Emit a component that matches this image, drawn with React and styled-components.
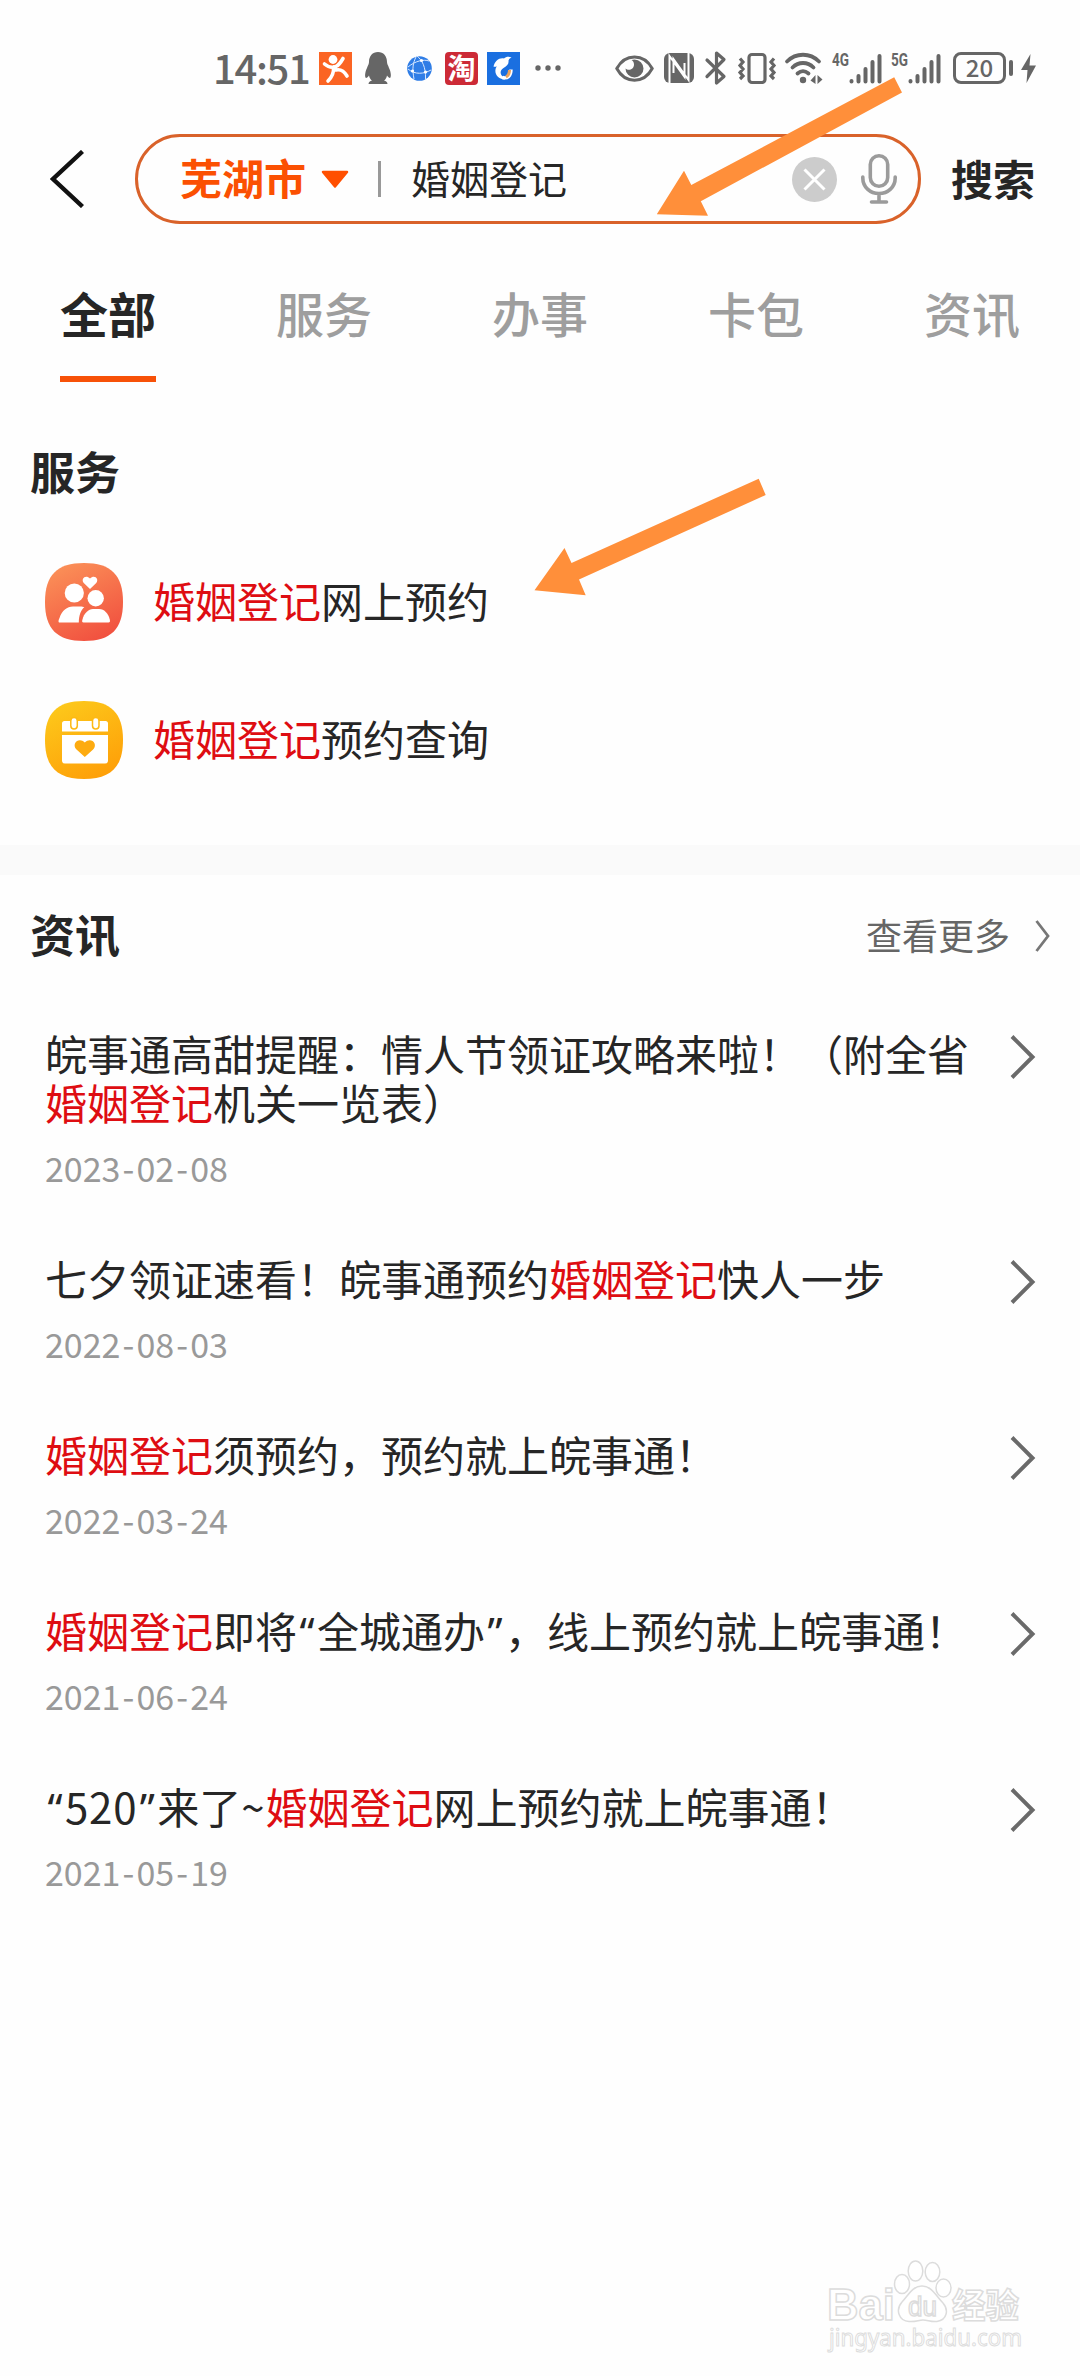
import React from 'react';
import styled, { createGlobalStyle } from 'styled-components';

const KEYWORD = '婚姻登记';

const tabs = ['全部', '服务', '办事', '卡包', '资讯'];

const news = [
  { title: '皖事通高甜提醒：情人节领证攻略来啦！（附全省婚姻登记机关一览表）', date: '2023-02-08' },
  { title: '七夕领证速看！皖事通预约婚姻登记快人一步', date: '2022-08-03' },
  { title: '婚姻登记须预约，预约就上皖事通！', date: '2022-03-24' },
  { title: '婚姻登记即将“全城通办”，线上预约就上皖事通！', date: '2021-06-24' },
  { title: '“520”来了~婚姻登记网上预约就上皖事通！', date: '2021-05-19' },
];

// splits on the keyword, on curly quotes and on latin runs, which need their own width
function Highlight({ text }) {
  return text.split(/(婚姻登记|[“”]|[\d~]+)/).map((part, i) => {
    if (part === KEYWORD) return <Red key={i}>{part}</Red>;
    if (part === '“' || part === '”') return <Quote key={i}>{part}</Quote>;
    if (/^[\d~]+$/.test(part)) return <Latin key={i}>{part}</Latin>;
    return part;
  });
}

function DateText({ value }) {
  return (
    <NewsDate>
      {value.split(/(-)/).map((part, i) => (part === '-' ? <Dash key={i}>-</Dash> : part))}
    </NewsDate>
  );
}

function SignalBars({ label }) {
  return (
    <Icon $left={9} width="50" height="34" viewBox="0 0 50 34">
      <SignalLabel x="0" y="15" textLength="17" lengthAdjust="spacingAndGlyphs">
        {label}
      </SignalLabel>
      <g stroke="#666" strokeWidth="4" strokeLinecap="round">
        <path d="M19.5 30V30.5M26.5 25V30.5M33.5 18V30.5M40.5 11V30.5M47.5 5V30.5" />
      </g>
    </Icon>
  );
}

function StatusBar() {
  return (
    <StatusWrapper>
      <StatusGroup>
        <Time>14:51</Time>
        <Icon width="33" height="33" viewBox="0 0 33 33">
          <rect width="33" height="33" fill="#fb6423" />
          <circle cx="14" cy="7.5" r="4.4" fill="#fff" />
          <path
            d="M5.5 12C9 15 13 16 17 14.5C20 13 22 10 24 6.5M14.5 15C15 20 13 25 9 29M17 18C21 17 25 19 28 24"
            fill="none"
            stroke="#fff"
            strokeWidth="3.6"
            strokeLinecap="round"
          />
        </Icon>
        <Icon $left={13} width="26" height="32" viewBox="0 0 26 32">
          <path
            fill="#666"
            d="M13 0C7.5 0 4 4 4 10C4 12 3 13 2 16C0 20 -.5 25 1 26C2 26 3 25 4 23.5C4.5 26 5.5 27.5 7 28.5C5 29 3.5 30 3.5 32H22.5C22.5 30 21 29 19 28.5C20.5 27.5 21.5 26 22 23.5C23 25 24 26 25 26C26.5 25 26 20 24 16C23 13 22 12 22 10C22 4 18.5 0 13 0Z"
          />
        </Icon>
        <Icon $left={16} width="25" height="25" viewBox="0 0 25 25">
          <circle cx="12.5" cy="12.5" r="12.3" fill="#2f7de6" />
          <path
            d="M10 0C15 4 19 11 18.5 23M1 11C8 5 17 3 22 5M1 13C8 19 17 18 24 14M9 1C6 7 5 12 7 23"
            fill="none"
            stroke="#d7e8ff"
            strokeWidth="1"
          />
          <circle cx="14.5" cy="4.5" r="1.6" fill="#fff" />
          <circle cx="18.5" cy="16" r="1.6" fill="#fff" />
          <circle cx="5.5" cy="15" r="1.6" fill="#fff" />
        </Icon>
        <Icon $left={13} width="33" height="33" viewBox="0 0 33 33">
          <rect width="33" height="33" rx="4" fill="#cc2a36" />
          <TaoLabel x="2.5" y="26.5">淘</TaoLabel>
        </Icon>
        <Icon $left={9} width="33" height="33" viewBox="0 0 33 33">
          <rect width="33" height="33" fill="#1a6fe0" />
          <path
            fill="#fff"
            d="M6.5 14.5C8 9 12 5.500 17 6.500C19 4.500 22 4.300 24.500 5.500C22.500 6.500 21.500 7.500 21.500 9C22 12 19.500 14.500 16.500 16C13 18 12.500 22 16 24.500C17 25.500 18 26.500 18 27.500C12 27.500 7.500 23 8.500 17.500C8.700 16 9.300 15 9.800 14.200C8.800 14.800 7.500 15 6.500 14.500Z"
          />
          <path d="M15.500 25.500C20.500 27 24 24 24 17.500" fill="none" stroke="#fff" strokeWidth="3.400" />
          <path d="M19 25C21.500 23.500 22.500 21.500 22.500 18" fill="none" stroke="#e9a25e" strokeWidth="3" />
        </Icon>
        <Icon $left={15} width="26" height="6" viewBox="0 0 26 6">
          <g fill="#666">
            <circle cx="3" cy="3" r="2.7" />
            <circle cx="13" cy="3" r="2.7" />
            <circle cx="23" cy="3" r="2.7" />
          </g>
        </Icon>
      </StatusGroup>
      <StatusGroup>
        <Icon width="39" height="27" viewBox="0 0 39 27">
          <path
            d="M1.8 13.5C10 -2 29 -2 37.2 13.5C29 29 10 29 1.8 13.5Z"
            fill="none"
            stroke="#666"
            strokeWidth="3"
          />
          <path fill="#666" d="M19.5 4.5A9 9 0 1 1 10.5 13.5C13 16 19 15 19 9.5C19 7.5 18 5.5 16.5 5Z" />
        </Icon>
        <Icon $left={10} width="30" height="30" viewBox="0 0 30 30">
          <rect width="30" height="30" rx="6" fill="#666" />
          <path
            d="M5.5 30V3L20.500 24V10M24.500 0V27L9.500 6V20"
            fill="none"
            stroke="#fff"
            strokeWidth="2"
          />
        </Icon>
        <Icon $left={11} width="22" height="34" viewBox="0 0 22 34">
          <path
            d="M2 9L19 25.5L11.5 32V2L19 8.5L2 25.5"
            fill="none"
            stroke="#666"
            strokeWidth="3.2"
            strokeLinejoin="round"
            strokeLinecap="round"
          />
        </Icon>
        <Icon $left={11} width="38" height="31" viewBox="0 0 38 31">
          <g fill="none" stroke="#666" strokeWidth="3.2">
            <rect x="11" y="1.5" width="16" height="28" rx="3" />
            <path d="M2 5.5L5 9L2 12.5L5 16L2 19.5L5 23L2 26M36 5.5L33 9L36 12.5L33 16L36 19.5L33 23L36 26" />
          </g>
        </Icon>
        <Icon $left={9} width="38" height="31" viewBox="0 0 38 31">
          <g fill="none" stroke="#666" strokeWidth="3.8" strokeLinecap="round">
            <path d="M2 8.5C11 -.5 25 -.5 34 8.5" />
            <path d="M7.5 14.5C13.5 8.5 22.5 8.5 28.5 14.5" />
            <path d="M12.5 20.5C16 17.5 20 17.5 23.5 20.5" />
          </g>
          <circle cx="18" cy="27" r="3.2" fill="#666" />
          <path d="M30.5 22V31L25.5 27.5ZM32.5 22V31L37.5 26.5Z" fill="#666" />
        </Icon>
        <SignalBars label="4G" />
        <SignalBars label="5G" />
        <Battery>20</Battery>
        <BatteryNub />
        <Icon $left={8} width="15" height="29" viewBox="0 0 15 29">
          <path d="M9.5 0L0 16H6.5L5.5 29L15 11.5H8.5Z" fill="#666" />
        </Icon>
      </StatusGroup>
    </StatusWrapper>
  );
}

function SearchBar() {
  return (
    <SearchRow>
      <BackIcon width="34" height="58" viewBox="0 0 34 58">
        <path d="M32.5 1.5L3 29L32.5 56.5" fill="none" stroke="#111" strokeWidth="4.4" />
      </BackIcon>
      <SearchPill>
        <City>芜湖市</City>
        <CityArrow width="28" height="19" viewBox="0 0 28 19">
          <path
            d="M2 2H26L14 16.5Z"
            fill="#ff4f00"
            stroke="#ff4f00"
            strokeWidth="2.5"
            strokeLinejoin="round"
          />
        </CityArrow>
        <Divider />
        <Query>{KEYWORD}</Query>
        <svg width="45" height="45" viewBox="0 0 45 45">
          <circle cx="22.5" cy="22.5" r="22.5" fill="#ccc" />
          <path d="M12.5 12.5L32.5 32.5M32.5 12.5L12.5 32.5" stroke="#fff" strokeWidth="3" />
        </svg>
        <MicIcon width="36" height="50" viewBox="0 0 36 50">
          <g fill="none" stroke="#9b9b9b" strokeWidth="3.6" strokeLinecap="round">
            <rect x="9.3" y="1.8" width="17.4" height="30.4" rx="8.7" />
            <path d="M1.8 23V24C1.8 33 9 39.5 18 39.5S34.2 33 34.2 24V23M18 40V47.5M10.5 48H25.5" />
          </g>
        </MicIcon>
      </SearchPill>
      <SearchButton>搜索</SearchButton>
    </SearchRow>
  );
}

function CoupleIcon() {
  return (
    <svg width="78" height="78" viewBox="0 0 78 78">
      <defs>
        <linearGradient id="couple" x1="0.2" y1="0" x2="0.7" y2="1">
          <stop offset="0" stopColor="#fb9158" />
          <stop offset="1" stopColor="#f1503f" />
        </linearGradient>
      </defs>
      <path d="M39 0C66 0 78 12 78 39S66 78 39 78 0 66 0 39 12 0 39 0Z" fill="url(#couple)" />
      <g fill="#fff">
        <circle cx="29.3" cy="30" r="9.6" />
        <circle cx="50.7" cy="35.3" r="8.2" />
        <path d="M45 26L38.8 20C35.5 16 40.5 11 45 15.5C49.5 11 54.5 16 51.2 20Z" />
        <path d="M14.5 59.5C13 59.5 13.5 57 14.5 55C17 47.5 22 43.5 28 43.5H35C37 43.5 38.5 43.7 39.3 44.3C36 47 34 52 33.8 59.5Z" />
        <path d="M38.5 59.5C37 59.5 37 58.5 37.3 57C39 50 43.5 46 48 46H54C59.5 46 63.5 51 64.8 56.5C65.2 58.5 65 59.5 63.5 59.5Z" />
      </g>
    </svg>
  );
}

function CalendarIcon() {
  return (
    <svg width="78" height="78" viewBox="0 0 78 78">
      <defs>
        <linearGradient id="calendar" x1="0.2" y1="0" x2="0.7" y2="1">
          <stop offset="0" stopColor="#fdc91b" />
          <stop offset="1" stopColor="#fe9f08" />
        </linearGradient>
      </defs>
      <path d="M39 0C66 0 78 12 78 39S66 78 39 78 0 66 0 39 12 0 39 0Z" fill="url(#calendar)" />
      <path
        d="M17 30.5V22.5Q17 20 19.5 20H60.5Q63 20 63 22.5V30.5ZM17 34H63V59.5Q63 62.5 60 62.5H20Q17 62.5 17 59.5Z"
        fill="#fff"
      />
      <g fill="#fff" stroke="#fdb914" strokeWidth="1.5">
        <rect x="25.8" y="16.5" width="6.5" height="11.5" rx="3.2" />
        <rect x="47.5" y="16.5" width="6.5" height="11.5" rx="3.2" />
      </g>
      <path
        d="M39.8 56L31.500 48.500C26 42.500 34 35.500 39.800 41.500C45.600 35.500 53.600 42.500 48.100 48.500Z"
        fill="#fdab10"
      />
    </svg>
  );
}

function Chevron() {
  return (
    <ChevronSvg width="26" height="44" viewBox="0 0 26 44">
      <path d="M2 1.5L22.5 22L2 42.5" fill="none" stroke="#6a6a6a" strokeWidth="4" />
    </ChevronSvg>
  );
}

function Watermark() {
  return (
    <WatermarkSvg width="210" height="110" viewBox="0 0 210 110">
      <g fill="#fff" stroke="#dcdcdc" strokeWidth="1.5">
        <BrandText x="7" y="70" textLength="68" lengthAdjust="spacingAndGlyphs">
          Bai
        </BrandText>
        <ellipse cx="82" cy="34" rx="7.5" ry="9.5" />
        <ellipse cx="95.5" cy="21" rx="7.3" ry="10" />
        <ellipse cx="112.500" cy="22" rx="7.3" ry="9.5" />
        <ellipse cx="123.5" cy="38" rx="7.5" ry="9" />
        <path d="M102 36C92 36 88 46 82 52C75 60 79 71 89 71.5C97 72 98 70 103 70C108 70 110 72 117 71.5C127 70 129 60 123 53C116 46 112 36 102 36Z" />
        <DuText x="88" y="66" textLength="29" lengthAdjust="spacingAndGlyphs">
          du
        </DuText>
        <JingyanText x="132" y="68" textLength="67" lengthAdjust="spacingAndGlyphs">
          经验
        </JingyanText>
        <UrlText x="9" y="96" textLength="193" lengthAdjust="spacingAndGlyphs">
          jingyan.baidu.com
        </UrlText>
      </g>
    </WatermarkSvg>
  );
}

function App() {
  return (
    <Page>
      <GlobalStyle />
      <StatusBar />
      <SearchBar />
      <Tabs>
        {tabs.map((tab, i) => (
          <Tab key={tab} $active={i === 0}>
            {tab}
          </Tab>
        ))}
      </Tabs>
      <Services>
        <Heading>服务</Heading>
        <ServiceRow>
          <CoupleIcon />
          <ServiceName>
            <Highlight text="婚姻登记网上预约" />
          </ServiceName>
        </ServiceRow>
        <ServiceRow>
          <CalendarIcon />
          <ServiceName>
            <Highlight text="婚姻登记预约查询" />
          </ServiceName>
        </ServiceRow>
      </Services>
      <News>
        <NewsHeader>
          <Heading>资讯</Heading>
          <More>
            查看更多
            <MoreIcon width="15" height="32" viewBox="0 0 15 32">
              <path d="M1.5 1L13 16L1.5 31" fill="none" stroke="#777" strokeWidth="2.8" />
            </MoreIcon>
          </More>
        </NewsHeader>
        {news.map((item) => (
          <NewsItem key={item.date}>
            <NewsBody>
              <NewsTitle>
                <Highlight text={item.title} />
              </NewsTitle>
              <DateText value={item.date} />
            </NewsBody>
            <Chevron />
          </NewsItem>
        ))}
      </News>
      <PointerLayer width="1080" height="640" viewBox="0 0 1080 640">
        <g fill="#ff8f3a">
          <path d="M656.8 214.3L684 170.7L691.3 185L894.2 77.3L902 92.5L700.8 201.3L708 215.7Z" />
          <path d="M534.5 590.2L564.5 548L571.5 563L758.7 478.7L765.7 495L579 579.5L585.7 595.3Z" />
        </g>
      </PointerLayer>
      <Watermark />
    </Page>
  );
}

const GlobalStyle = createGlobalStyle`
  body {
    margin: 0;
    background-color: #fefefe;
  }
`;

const Page = styled.div`
  position: relative;
  width: 1080px;
  height: 2376px;
  overflow: hidden;
  background-color: #fefefe;
  color: #262626;
  font-family: 'Noto Sans CJK SC', sans-serif;
  text-spacing-trim: space-all;

  svg {
    display: block;
    flex-shrink: 0;
  }
`;

const StatusWrapper = styled.div`
  box-sizing: border-box;
  height: 134px;
  padding: 48px 44px 0 213px;
  display: flex;
  justify-content: space-between;
  align-items: flex-start;
`;

const StatusGroup = styled.div`
  display: flex;
  align-items: center;
  height: 40px;
`;

const Icon = styled.svg`
  margin-left: ${({ $left }) => $left || 0}px;
  overflow: visible;
`;

const Time = styled.div`
  width: 106px;
  margin-top: -3px;
  font-size: 40px;
  font-weight: 500;
  line-height: 58px;
  letter-spacing: -1.3px;
  color: #666;
`;

const SignalLabel = styled.text`
  font-family: Roboto, sans-serif;
  font-size: 19px;
  font-weight: 700;
  fill: #666;
`;

const TaoLabel = styled.text`
  font-size: 28px;
  font-weight: 700;
  fill: #fff;
`;

const Battery = styled.div`
  box-sizing: border-box;
  width: 53px;
  height: 32px;
  margin-left: 12px;
  border: 3px solid #666;
  border-radius: 8px;
  color: #666;
  font-size: 24px;
  font-weight: 500;
  line-height: 24px;
  text-align: center;
`;

const BatteryNub = styled.div`
  width: 4px;
  height: 16px;
  margin-left: 3px;
  border-radius: 2px;
  background-color: #666;
`;

const SearchRow = styled.div`
  display: flex;
  align-items: center;
  height: 90px;
  padding-left: 50px;
`;

const BackIcon = styled.svg`
  margin-right: 51px;
`;

const SearchPill = styled.div`
  box-sizing: border-box;
  display: flex;
  align-items: center;
  width: 786px;
  height: 90px;
  padding: 0 21px 0 42px;
  border: 3px solid #d9622a;
  border-radius: 45px;
`;

const City = styled.div`
  margin-top: -5px;
  color: #fb5002;
  font-size: 42px;
  font-weight: 700;
  line-height: 60px;
`;

const CityArrow = styled.svg`
  margin-left: 15px;
`;

const Divider = styled.div`
  width: 3px;
  height: 36px;
  margin-left: 29px;
  background-color: #999;
`;

const Query = styled.div`
  flex: 1;
  margin-top: -4px;
  padding-left: 30px;
  font-size: 39px;
  line-height: 60px;
`;

const MicIcon = styled.svg`
  margin-left: 24px;
`;

const SearchButton = styled.div`
  margin: -3px 0 0 30px;
  font-size: 42px;
  font-weight: 700;
  line-height: 60px;
`;

const Tabs = styled.div`
  display: flex;
`;

const Tab = styled.div`
  flex: 1;
  padding-top: 52px;
  color: ${({ $active }) => ($active ? '#262626' : '#9e9e9e')};
  font-size: 48px;
  font-weight: ${({ $active }) => ($active ? 700 : 500)};
  line-height: 72px;
  text-align: center;

  &::after {
    content: '';
    display: block;
    width: 96px;
    height: 6px;
    margin: 28px auto 0;
    background-color: ${({ $active }) => ($active ? '#f75108' : 'transparent')};
  }
`;

const Services = styled.div`
  padding: 57px 30px 36px;
`;

const Heading = styled.div`
  font-size: 45px;
  font-weight: 700;
  line-height: 64px;

  ${Services} & {
    margin-bottom: 30px;
  }
`;

const ServiceRow = styled.div`
  display: flex;
  align-items: center;
  height: 138px;
  padding-left: 15px;
`;

const ServiceName = styled.div`
  margin: -5px 0 0 30px;
  font-size: 42px;
  line-height: 60px;
`;

const Red = styled.span`
  color: #de0d12;
`;

const News = styled.div`
  border-top: 30px solid #fafafa;
  padding: 27px 30px 0;
`;

const NewsHeader = styled.div`
  display: flex;
  align-items: center;
  justify-content: space-between;
  margin-bottom: 62px;
`;

const More = styled.div`
  display: flex;
  align-items: center;
  color: #666;
  font-size: 36px;
  line-height: 60px;
`;

const MoreIcon = styled.svg`
  margin: 3px 0 0 25px;
`;

const NewsItem = styled.div`
  display: flex;
  justify-content: space-between;
  padding: 0 14px 65px 15px;
`;

const NewsBody = styled.div`
  width: 930px;
`;

const NewsTitle = styled.div`
  font-size: 42px;
  line-height: 49px;
  word-break: break-all;
`;

const Quote = styled.span`
  display: inline-block;
  width: 20px;
  font-family: 'Noto Sans', sans-serif;
  line-height: 1;
  text-align: center;
`;

const Latin = styled.span`
  letter-spacing: 0.8px;
`;

const NewsDate = styled.div`
  margin-top: 22px;
  color: #999;
  font-size: 34px;
  line-height: 40px;
`;

const Dash = styled.span`
  display: inline-block;
  width: 16px;
  text-align: center;
`;

const ChevronSvg = styled.svg`
  margin-top: 7px;
`;

// hand-drawn pointers float over the page
const PointerLayer = styled.svg`
  position: absolute;
  top: 0;
  left: 0;
  pointer-events: none;
`;

const WatermarkSvg = styled.svg`
  position: absolute;
  top: 2250px;
  left: 820px;
`;

const BrandText = styled.text`
  font-family: 'Liberation Sans', sans-serif;
  font-size: 45px;
  font-weight: 700;
`;

const DuText = styled.text`
  font-family: 'Liberation Sans', sans-serif;
  font-size: 27px;
`;

const JingyanText = styled.text`
  font-family: 'Noto Sans CJK SC', sans-serif;
  font-size: 34px;
  font-weight: 700;
`;

const UrlText = styled.text`
  font-family: 'Noto Sans', sans-serif;
  font-size: 24px;
  stroke-width: 1;
`;

export default App;
